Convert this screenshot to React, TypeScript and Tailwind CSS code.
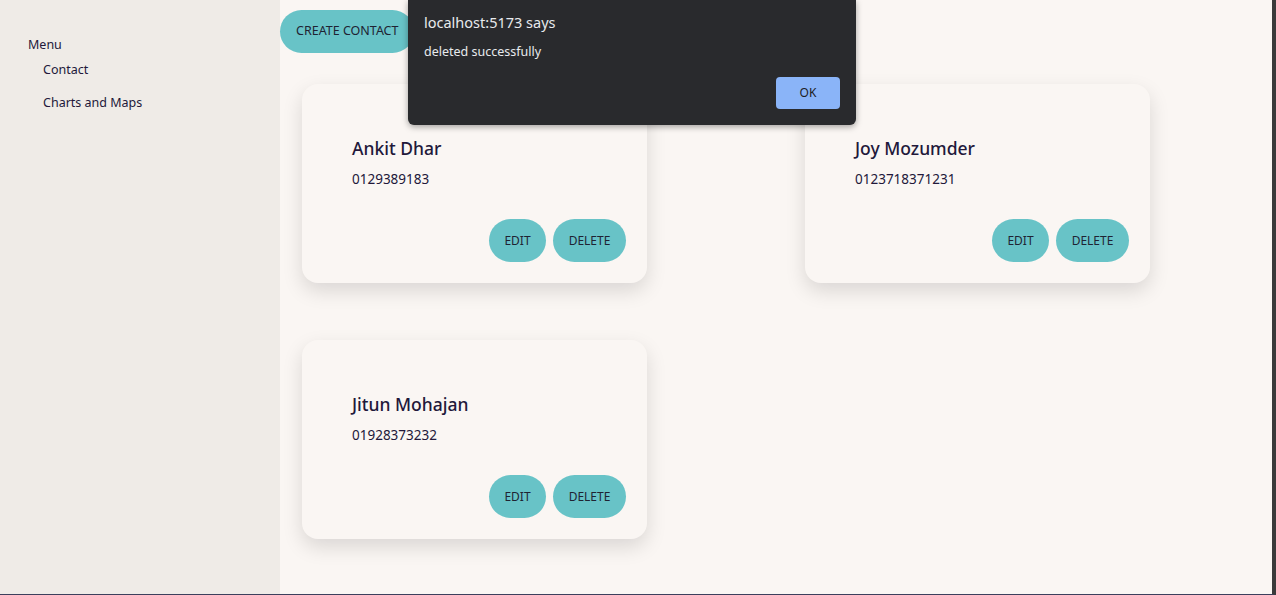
import { FunctionComponent } from "react";

type Contact = { name: string; phone: string };

const contacts: Contact[] = [
  { name: "Ankit Dhar", phone: "0129389183" },
  { name: "Joy Mozumder", phone: "0123718371231" },
  { name: "Jitun Mohajan", phone: "01928373232" },
];

const ContactCard: FunctionComponent<{ contact: Contact }> = ({ contact }) => {
  return (
    <div className="w-[345px] h-[199px] bg-[#faf6f3] rounded-[16px] shadow-[0_8px_20px_rgba(0,0,0,0.13)] flex flex-col pt-[53px] pl-[50px] pr-[21px] pb-[21px] box-border">
      <div className="text-[17.5px] leading-[22px] font-medium text-[#22183a]">
        {contact.name}
      </div>
      <div className="mt-[11px] text-[13.5px] leading-[18px] text-[#22183a]">
        {contact.phone}
      </div>
      <div className="mt-auto flex flex-row justify-end gap-[7px]">
        <button className="h-[43px] w-[57px] rounded-full bg-[#68c3c7] text-[12px] text-[#1f2333]">
          EDIT
        </button>
        <button className="h-[43px] w-[73px] rounded-full bg-[#68c3c7] text-[12px] text-[#1f2333]">
          DELETE
        </button>
      </div>
    </div>
  );
};

const AlertDialog: FunctionComponent = () => {
  return (
    <div className="absolute left-[408px] top-0 w-[448px] h-[125px] bg-[#292a2d] rounded-b-[6px] shadow-[0_2px_6px_rgba(0,0,0,0.35)] px-4 pt-[12px] box-border z-10">
      <div className="text-[14.5px] leading-[20px] text-[#e8eaed]">localhost:5173 says</div>
      <div className="mt-[11px] text-[12.5px] leading-[17px] text-[#e8eaed]">
        deleted successfully
      </div>
      <div className="flex justify-end mt-[17px]">
        <button className="h-[32px] w-[64px] rounded-[4px] bg-[#8ab4f8] text-[12px] text-[#202124]">
          OK
        </button>
      </div>
    </div>
  );
};

const App: FunctionComponent = () => {
  return (
    <div
      className="relative w-[1276px] h-[595px] flex flex-row overflow-hidden border-r-4 border-r-[#3a3a3a] border-b border-b-[#3b3f5c] box-border"
      style={{ fontFamily: '"Noto Sans", "Open Sans", sans-serif' }}
    >
      <aside className="w-[280px] shrink-0 bg-[#efebe7] pt-[36px] pl-[28px] text-[12.5px] text-[#22183a]">
        <div className="leading-[18px]">Menu</div>
        <div className="pl-[15px] mt-[7px] leading-[18px]">Contact</div>
        <div className="pl-[15px] mt-[15px] leading-[18px]">Charts and Maps</div>
      </aside>
      <main className="flex-1 bg-[#faf6f3] pt-[10px]">
        <button className="h-[43px] px-4 rounded-full bg-[#68c3c7] text-[12.5px] text-[#1f2333]">
          CREATE CONTACT
        </button>
        <div className="mt-[31px] pl-[22px] grid grid-cols-[345px_345px] gap-x-[158px] gap-y-[57px]">
          {contacts.map((c) => (
            <ContactCard key={c.name} contact={c} />
          ))}
        </div>
      </main>
      <AlertDialog />
    </div>
  );
};

export default App;
